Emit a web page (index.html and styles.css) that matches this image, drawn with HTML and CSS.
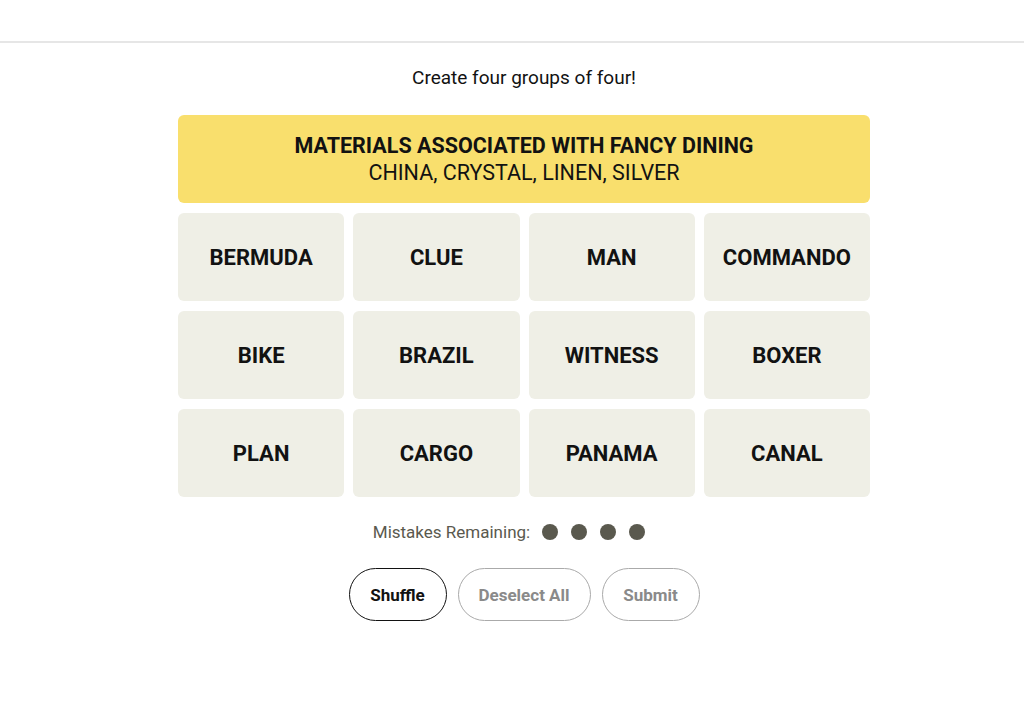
FILE: index.html
```html
<!DOCTYPE html>
<html lang="en">
<head>
    <meta charset="UTF-8">
    <meta name="viewport" content="width=device-width, initial-scale=1.0">
    <title>Connections</title>
    <link rel="stylesheet" href="styles.css">
</head>
<body>
    <header class="topbar"></header>
    <main class="game">
        <p class="prompt">Create four groups of four!</p>
        <div class="board">
            <div class="solved yellow">
                <h3>MATERIALS ASSOCIATED WITH FANCY DINING</h3>
                <p>CHINA, CRYSTAL, LINEN, SILVER</p>
            </div>
            <div class="tiles">
                <button class="tile">BERMUDA</button>
                <button class="tile">CLUE</button>
                <button class="tile">MAN</button>
                <button class="tile">COMMANDO</button>
                <button class="tile">BIKE</button>
                <button class="tile">BRAZIL</button>
                <button class="tile">WITNESS</button>
                <button class="tile">BOXER</button>
                <button class="tile">PLAN</button>
                <button class="tile">CARGO</button>
                <button class="tile">PANAMA</button>
                <button class="tile">CANAL</button>
            </div>
        </div>
        <div class="mistakes">
            <span>Mistakes Remaining:</span>
            <span class="dots">
                <span class="dot"></span>
                <span class="dot"></span>
                <span class="dot"></span>
                <span class="dot"></span>
            </span>
        </div>
        <div class="actions">
            <button class="pill active shuffle">Shuffle</button>
            <button class="pill deselect">Deselect All</button>
            <button class="pill submit">Submit</button>
        </div>
    </main>
</body>
</html>
```

FILE: styles.css
```css
body {
    margin: 0;
    padding: 0;
    background-color: #fff;
    font-family: Roboto, "Liberation Sans", sans-serif;
    color: #121212;
}
.topbar {
    height: 41px;
    border-bottom: 2px solid #e6e6e6;
}
.game {
    width: 692px;
    margin: 0 auto 0 178px;
}
.prompt {
    margin: 23px 0 0;
    height: 24px;
    line-height: 24px;
    text-align: center;
    font-size: 19px;
}
.board {
    margin-top: 25px;
    display: flex;
    flex-direction: column;
    gap: 10px;
}
.solved {
    height: 88px;
    border-radius: 6px;
    display: flex;
    flex-direction: column;
    justify-content: center;
    align-items: center;
}
.yellow {
    background-color: #f9df6d;
}
.solved h3 {
    margin: 0;
    font-size: 21.5px;
    font-weight: 700;
    line-height: 27px;
}
.solved p {
    margin: 0;
    font-size: 21.5px;
    line-height: 27px;
}
.tiles {
    display: grid;
    grid-template-columns: repeat(4, 1fr);
    column-gap: 9px;
    row-gap: 10px;
}
.tile {
    height: 88px;
    border: none;
    border-radius: 6px;
    background-color: #efefe6;
    color: #121212;
    font-family: inherit;
    font-size: 22px;
    font-weight: 700;
    cursor: pointer;
}
.mistakes {
    margin-top: 24px;
    padding-right: 30px;
    display: flex;
    justify-content: center;
    align-items: center;
    gap: 12px;
    font-size: 17px;
    color: #5a594e;
    height: 22px;
}
.dots {
    display: flex;
    gap: 13px;
}
.dot {
    width: 16px;
    height: 16px;
    border-radius: 50%;
    background-color: #5a594e;
}
.actions {
    margin-top: 25px;
    display: flex;
    justify-content: center;
    gap: 11px;
}
.pill {
    height: 53px;
    padding: 0 12px;
    border: 1px solid #aaa;
    border-radius: 27px;
    background-color: #fff;
    color: #8a8a8a;
    font-family: inherit;
    font-size: 17px;
    font-weight: 700;
}
.pill.active {
    border-color: #121212;
    color: #121212;
    cursor: pointer;
}
.shuffle { width: 98px; }
.deselect { width: 133px; }
.submit { width: 98px; }
```
